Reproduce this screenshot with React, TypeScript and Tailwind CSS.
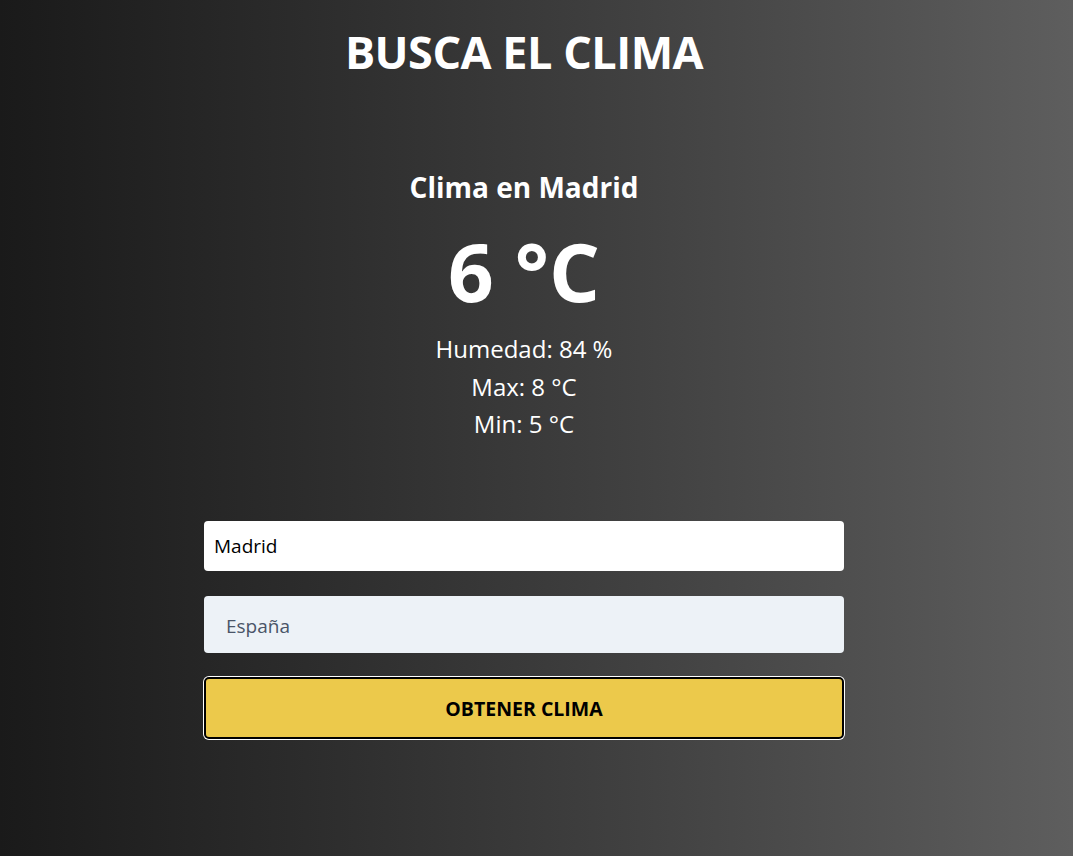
import React from "react";

export default function App() {
  return (
    <div
      className="min-h-[856px] w-full bg-gradient-to-r from-[#1a1a1a] to-[#5e5e5e] text-white flex flex-col items-center pr-[25px]"
      style={{ fontFamily: '"Open Sans", "Noto Sans", sans-serif' }}
    >
      <h1 className="mt-[24px] text-[45px] leading-[56px] font-bold tracking-[-0.5px]">BUSCA EL CLIMA</h1>

      <div className="mt-[89px] flex flex-col items-center">
        <h2 className="text-[28px] leading-[36px] font-bold">Clima en Madrid</h2>
        <p className="mt-[24px] text-[80px] leading-[84px] font-bold">6 °C</p>
        <div className="mt-[17px] flex flex-col items-center text-[24px] leading-[37.5px]">
          <p>Humedad: 84 %</p>
          <p>Max: 8 °C</p>
          <p>Min: 5 °C</p>
        </div>
      </div>

      <form className="mt-[78px] w-[640px] flex flex-col">
        <input
          defaultValue="Madrid"
          className="h-[50px] w-full rounded-[4px] bg-white px-[10px] text-[19px] text-black outline-none"
        />
        <input
          placeholder="España"
          className="mt-[25px] h-[57px] w-full rounded-[4px] bg-[#edf2f7] px-[22px] pt-[4px] text-[19px] text-black placeholder:text-[#4a5568] outline-none"
        />
        <button
          type="button"
          className="mt-[24px] h-[62px] w-full rounded-[5px] border-2 border-black bg-[#ecc94b] pt-[2px] text-[19.5px] font-bold text-black ring-1 ring-white"
        >
          OBTENER CLIMA
        </button>
      </form>
    </div>
  );
}
